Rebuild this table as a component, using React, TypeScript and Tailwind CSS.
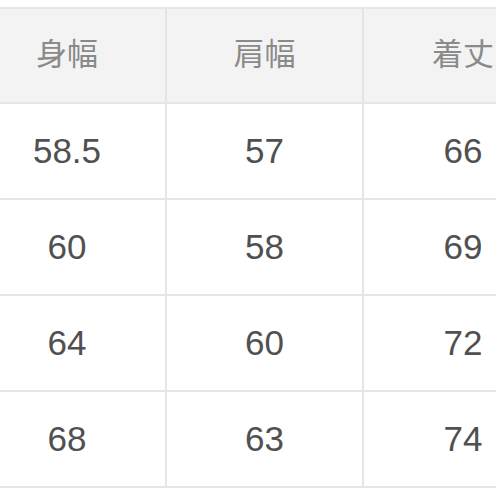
const header = ["身幅", "肩幅", "着丈"];
const rows = [
  ["58.5", "57", "66"],
  ["60", "58", "69"],
  ["64", "60", "72"],
  ["68", "63", "74"],
];

export default function App() {
  return (
    <div className="w-[496px] h-[496px] overflow-hidden bg-white pt-[7px] font-['Liberation_Sans','Noto_Sans_CJK_JP',sans-serif]">
      <div className="ml-[-31px] w-[600px]">
        {/* header */}
        <div className="grid grid-cols-[198px_197px_198px] h-[97px] border-y-2 border-[#e6e6e6] bg-[#f3f3f3]">
          {header.map((h, i) => (
            <div
              key={h}
              className={`flex items-center justify-center text-[31px] text-[#8a8a8a] ${i < 2 ? "border-r-2 border-[#e4e4e4]" : ""}`}
            >
              {h}
            </div>
          ))}
        </div>
        {rows.map((r, ri) => (
          <div
            key={ri}
            className="grid grid-cols-[198px_197px_198px] h-[96px] border-b-2 border-[#e6e6e6]"
          >
            {r.map((v, i) => (
              <div
                key={i}
                className={`flex items-center justify-center text-[35px] text-[#505050] ${i < 2 ? "border-r-2 border-[#e6e6e6]" : ""}`}
              >
                {v}
              </div>
            ))}
          </div>
        ))}
      </div>
    </div>
  );
}
